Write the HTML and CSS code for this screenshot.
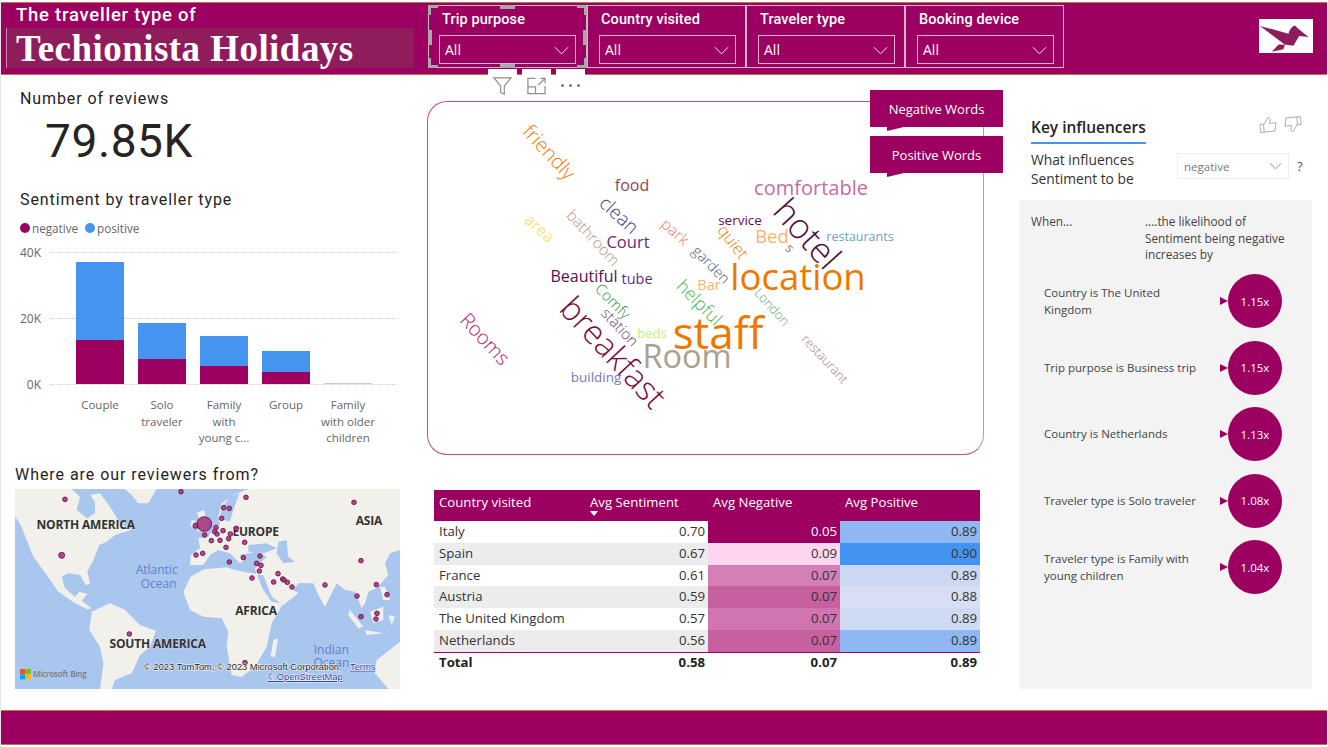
FILE: index.html
```html
<!DOCTYPE html>
<html lang="en">
<head>
<meta charset="utf-8">
<title>Techionista Holidays</title>
<link rel="stylesheet" href="styles.css">
</head>
<body>
<div class="page">
  <header class="header">
    <div class="brand">
      <div class="brand-sub">The traveller type of</div>
      <div class="brand-name">Techionista Holidays</div>
    </div>
    <div class="slicers">
      <div class="slicer slicer-focus">
        <div class="slicer-label">Trip purpose</div>
        <div class="slicer-box"><span>All</span><svg class="chev" viewBox="0 0 16 9"><path d="M1 1l7 7 7-7"/></svg></div>
        <i class="h h-tl"></i><i class="h h-tr"></i><i class="h h-bl"></i><i class="h h-br"></i><i class="h h-tm"></i><i class="h h-bm"></i><i class="h h-ml"></i><i class="h h-mr"></i>
        <div class="actions">
          <div class="action"><svg viewBox="0 0 22 22" class="act-ic"><path d="M1.500 2h19l-7.500 9v9l-4-2v-7z"/></svg></div>
          <div class="action"><svg viewBox="0 0 22 20" class="act-ic"><path d="M10 2H2v16h18v-8M2 11h8v7M13 9l7-7M15 2h5v5"/></svg></div>
          <div class="action action-more"><i></i><i></i><i></i></div>
        </div>
      </div>
      <div class="slicer">
        <div class="slicer-label">Country visited</div>
        <div class="slicer-box"><span>All</span><svg class="chev" viewBox="0 0 16 9"><path d="M1 1l7 7 7-7"/></svg></div>
      </div>
      <div class="slicer">
        <div class="slicer-label">Traveler type</div>
        <div class="slicer-box"><span>All</span><svg class="chev" viewBox="0 0 16 9"><path d="M1 1l7 7 7-7"/></svg></div>
      </div>
      <div class="slicer">
        <div class="slicer-label">Booking device</div>
        <div class="slicer-box"><span>All</span><svg class="chev" viewBox="0 0 16 9"><path d="M1 1l7 7 7-7"/></svg></div>
      </div>
    </div>
    <div class="logo">
      <svg viewBox="28 25 160 100"><path class="logo-bird" d="M31 45l84 23 4-10 7-10 8-4 12 11 29 23-28-3-17 29-26-4zM66 122l20-22 19 1-5 13z"/></svg>
    </div>
  </header>

  <main class="main">
    <section class="col-left">
      <h2 class="din-title title-reviews">Number of reviews</h2>
      <div class="stat">79.85K</div>
      <h2 class="din-title title-sent">Sentiment by traveller type</h2>
      <div class="legend">
        <span class="dot dot-neg"></span><span class="legend-text">negative</span>
        <span class="dot dot-pos"></span><span class="legend-text">positive</span>
      </div>
      <div class="chart">
        <div class="plot">
          <div class="grid-line gl-40"><span>40K</span></div>
          <div class="grid-line gl-20"><span>20K</span></div>
          <div class="grid-line gl-0"><span>0K</span></div>
          <div class="bars">
            <div class="bar-col"><div class="bar-pos" style="height:78px"></div><div class="bar-neg" style="height:44px"></div></div>
            <div class="bar-col"><div class="bar-pos" style="height:36px"></div><div class="bar-neg" style="height:25px"></div></div>
            <div class="bar-col"><div class="bar-pos" style="height:30px"></div><div class="bar-neg" style="height:18px"></div></div>
            <div class="bar-col"><div class="bar-pos" style="height:21px"></div><div class="bar-neg" style="height:12px"></div></div>
            <div class="bar-col"><div class="bar-tiny"></div></div>
          </div>
        </div>
        <div class="cats">
          <div class="cat">Couple</div>
          <div class="cat">Solo<br>traveler</div>
          <div class="cat">Family<br>with<br>young c...</div>
          <div class="cat">Group</div>
          <div class="cat">Family<br>with older<br>children</div>
        </div>
      </div>
      <h2 class="din-title title-map">Where are our reviewers from?</h2>
      <div class="map">
        <svg class="map-svg" viewBox="45 87 1155 600">
          <rect class="water" x="45" y="87" width="1155" height="600"/>
          <path class="land" d="M45 87H215L240 110 230 150 262 175 285 160 285 125 270 105 300 100 330 140 360 190 395 210 345 225 320 245 298 255 280 300 262 335 270 372 258 375 240 345 205 340 185 350 195 385 225 410 238 395 262 402 245 422 275 445 262 448 225 430 175 395 140 345 100 290 78 235 60 190 45 170Z"/>
          <path class="land" d="M375 87H470L445 130 415 130 395 105Z"/>
          <path class="land" d="M275 455 330 430 375 450 420 495 468 512 450 560 420 585 395 640 345 660 335 687H300L310 610 300 560 268 510Z"/>
          <path class="land" d="M550 395 572 350 612 328 680 322 705 330 770 342 790 390 815 425 850 430 815 490 800 560 765 620 725 650 695 645 680 560 685 515 665 475 610 470 570 450Z"/>
          <path class="land" d="M570 315 572 285 600 265 595 235 625 230 640 205 660 195 655 170 665 130 700 105 745 87H1200V270L1170 280 1155 310 1165 345 1130 385 1105 395 1095 430 1085 445 1065 395 1035 390 1010 370 975 440 955 405 940 370 895 370 880 390 895 400 850 435 815 410 790 345 770 345 765 325 800 290 770 275 720 285 735 300 720 310 690 280 655 270 630 285 610 315Z"/>
          <path class="water" d="M690 110 718 100 700 150 690 185 660 175 665 145Z"/>
          <path class="water" d="M745 255 800 250 830 265 790 280 745 275Z"/>
          <path class="water" d="M835 245 860 240 865 290 885 305 850 310 830 280Z"/>
          <path class="land" d="M590 158 612 150 622 190 630 208 590 215 605 190ZM575 180 588 182 585 200 570 198Z"/>
          <path class="land" d="M1050 450 1090 500 1075 505 1045 465ZM1095 510 1150 520 1100 525ZM1110 455 1150 440 1150 480 1120 490ZM1165 465 1185 470 1175 495ZM1140 380 1155 380 1170 420 1150 420Z"/>
          <path class="land" d="M1130 600 1200 545V687H1165L1125 640Z"/>
          <path class="land" d="M820 540 835 535 825 590 812 590Z"/>
          <text class="continent" x="257" y="208" text-anchor="middle">NORTH AMERICA</text>
          <text class="continent" x="1107" y="195" text-anchor="middle">ASIA</text>
          <text class="continent" x="767" y="228" text-anchor="middle">EUROPE</text>
          <text class="continent" x="768" y="465" text-anchor="middle">AFRICA</text>
          <text class="continent" x="473" y="565" text-anchor="middle">SOUTH AMERICA</text>
          <text class="ocean" x="470" y="342" text-anchor="middle">Atlantic</text>
          <text class="ocean" x="476" y="385" text-anchor="middle">Ocean</text>
          <text class="ocean" x="994" y="582" text-anchor="middle">Indian</text>
          <text class="ocean" x="994" y="622" text-anchor="middle">Ocean</text>
          <g class="pins">
            <circle cx="195" cy="118" r="7"/><circle cx="543" cy="95" r="7"/><circle cx="738" cy="112" r="7"/><circle cx="671" cy="143" r="7"/><circle cx="688" cy="145" r="7"/><circle cx="1062" cy="127" r="7"/><circle cx="665" cy="175" r="7"/><circle cx="587" cy="197" r="8"/><circle cx="613" cy="192" r="22"/><circle cx="648" cy="203" r="7"/><circle cx="709" cy="205" r="7"/><circle cx="644" cy="215" r="7"/><circle cx="669" cy="212" r="7"/><circle cx="651" cy="222" r="7"/><circle cx="691" cy="222" r="7"/><circle cx="614" cy="225" r="7"/><circle cx="686" cy="236" r="7"/><circle cx="634" cy="242" r="7"/><circle cx="660" cy="241" r="7"/><circle cx="734" cy="247" r="7"/><circle cx="678" cy="262" r="7"/><circle cx="185" cy="286" r="9"/><circle cx="588" cy="285" r="7"/><circle cx="608" cy="280" r="7"/><circle cx="780" cy="288" r="7"/><circle cx="730" cy="293" r="7"/><circle cx="688" cy="306" r="7"/><circle cx="770" cy="310" r="7"/><circle cx="783" cy="316" r="7"/><circle cx="778" cy="333" r="7"/><circle cx="834" cy="341" r="7"/><circle cx="848" cy="357" r="7"/><circle cx="852" cy="360" r="7"/><circle cx="862" cy="367" r="7"/><circle cx="876" cy="381" r="7"/><circle cx="756" cy="354" r="7"/><circle cx="821" cy="366" r="7"/><circle cx="1083" cy="302" r="7"/><circle cx="975" cy="375" r="7"/><circle cx="1129" cy="374" r="7"/><circle cx="1071" cy="408" r="7"/><circle cx="1161" cy="404" r="7"/><circle cx="1083" cy="470" r="7"/><circle cx="1131" cy="460" r="7"/><circle cx="1128" cy="477" r="7"/><circle cx="388" cy="522" r="7"/><circle cx="735" cy="608" r="7"/>
          </g>
          <rect class="ms-r" x="60" y="627" width="16" height="15"/><rect class="ms-g" x="77" y="627" width="15" height="15"/><rect class="ms-b" x="60" y="643" width="16" height="15"/><rect class="ms-y" x="77" y="643" width="15" height="15"/>
          <text class="bing" x="99" y="650">Microsoft Bing</text>
          <text class="attr" x="432" y="629">© 2023 TomTom, © 2023 Microsoft Corporation,</text>
          <text class="attr attr-link" x="1050" y="629">Terms</text>
          <text class="attr attr-link" x="802" y="660">© OpenStreetMap</text>
        </svg>
      </div>
    </section>

    <section class="col-mid">
      <div class="cloud">
        <span class="w w-friendly">friendly</span>
        <span class="w w-food">food</span>
        <span class="w w-clean">clean</span>
        <span class="w w-area">area</span>
        <span class="w w-bathroom">bathroom</span>
        <span class="w w-court">Court</span>
        <span class="w w-park">park</span>
        <span class="w w-service">service</span>
        <span class="w w-quiet">quiet</span>
        <span class="w w-bed">Bed</span>
        <span class="w w-s">s</span>
        <span class="w w-hotel">hotel</span>
        <span class="w w-comfortable">comfortable</span>
        <span class="w w-restaurants">restaurants</span>
        <span class="w w-beautiful">Beautiful</span>
        <span class="w w-tube">tube</span>
        <span class="w w-garden">garden</span>
        <span class="w w-location">location</span>
        <span class="w w-bar">Bar</span>
        <span class="w w-london">London</span>
        <span class="w w-helpful">helpful</span>
        <span class="w w-comfy">Comfy</span>
        <span class="w w-station">station</span>
        <span class="w w-beds">beds</span>
        <span class="w w-breakfast">breakfast</span>
        <span class="w w-room">Room</span>
        <span class="w w-staff">staff</span>
        <span class="w w-rooms">Rooms</span>
        <span class="w w-building">building</span>
        <span class="w w-restaurant">restaurant</span>
        <div class="word-btns">
          <div class="word-btn">Negative Words</div>
          <div class="word-btn">Positive Words</div>
        </div>
      </div>
      <div class="table">
        <div class="tr thead">
          <div class="th">Country visited</div>
          <div class="th th-sent">Avg Sentiment<i class="sort"></i></div>
          <div class="th">Avg Negative</div>
          <div class="th">Avg Positive</div>
        </div>
        <div class="tr"><div class="td">Italy</div><div class="td num">0.70</div><div class="td num n1">0.05</div><div class="td num p1">0.89</div></div>
        <div class="tr even"><div class="td">Spain</div><div class="td num">0.67</div><div class="td num n2">0.09</div><div class="td num p2">0.90</div></div>
        <div class="tr"><div class="td">France</div><div class="td num">0.61</div><div class="td num n3">0.07</div><div class="td num p3">0.89</div></div>
        <div class="tr even"><div class="td">Austria</div><div class="td num">0.59</div><div class="td num n4">0.07</div><div class="td num p4">0.88</div></div>
        <div class="tr"><div class="td">The United Kingdom</div><div class="td num">0.57</div><div class="td num n5">0.07</div><div class="td num p5">0.89</div></div>
        <div class="tr even"><div class="td">Netherlands</div><div class="td num">0.56</div><div class="td num n4">0.07</div><div class="td num p1">0.89</div></div>
        <div class="tr tfoot"><div class="td">Total</div><div class="td num">0.58</div><div class="td num">0.07</div><div class="td num">0.89</div></div>
      </div>
    </section>

    <section class="col-right">
      <div class="ki-head">
        <div class="ki-title">Key influencers</div>
        <div class="thumbs">
          <svg viewBox="0 0 20 18" class="thumb thumb-up"><path d="M1 8h4v9H1zM5 9l6-8 2 2-1 5h7l-2 9H5"/></svg>
          <svg viewBox="0 0 20 18" class="thumb thumb-down"><path d="M19 10h-4V1h4zM15 9l-6 8-2-2 1-5H1l2-9h12"/></svg>
        </div>
      </div>
      <div class="ki-q">
        <div class="ki-q-text">What influences<br>Sentiment to be</div>
        <div class="ki-select"><span>negative</span><svg class="chev-g" viewBox="0 0 14 8"><path d="M1 1l6 6 6-6"/></svg></div>
        <div class="ki-help">?</div>
      </div>
      <div class="ki-panel">
        <div class="ki-labels">
          <div class="ki-when">When...</div>
          <div class="ki-like">....the likelihood of<br>Sentiment being negative<br>increases by</div>
        </div>
        <div class="ki-row"><div class="ki-text">Country is The United<br>Kingdom</div><i class="ki-arrow"></i><div class="ki-circle">1.15x</div></div>
        <div class="ki-row"><div class="ki-text">Trip purpose is Business trip</div><i class="ki-arrow"></i><div class="ki-circle">1.15x</div></div>
        <div class="ki-row"><div class="ki-text">Country is Netherlands</div><i class="ki-arrow"></i><div class="ki-circle">1.13x</div></div>
        <div class="ki-row"><div class="ki-text">Traveler type is Solo traveler</div><i class="ki-arrow"></i><div class="ki-circle">1.08x</div></div>
        <div class="ki-row"><div class="ki-text">Traveler type is Family with<br>young children</div><i class="ki-arrow"></i><div class="ki-circle">1.04x</div></div>
      </div>
    </section>
  </main>

  <footer class="footer"></footer>
</div>
</body>
</html>
```

FILE: styles.css
```css
* { box-sizing: border-box; }
html, body { margin: 0; padding: 0; background: #fff; overflow: hidden; }
.page {
  width: 1328px; height: 747px; padding-top: 2px;
  display: flex; flex-direction: column;
  font-family: "Open Sans", "Liberation Sans", sans-serif;
  color: #333;
  border-left: 1px solid #e6e6e6;
}
/* header */
.header {
  height: 73px; margin-right: 1px;
  background: #9c0060;
  border-top: 1px solid #b8763e; border-bottom: 1px solid #b8763e;
  display: flex; color: #fff; flex: none;
}
.brand { width: 427px; padding: 2px 0 0 5px; flex: none; }
.brand-sub {
  font: 500 18.500px/20px Roboto, sans-serif; letter-spacing: .75px;
  padding-left: 10px; height: 23px;
}
.brand-name {
  width: 408px; height: 40px; background: #8f1d5c; border-left: 1px solid #c88aa9;
  font: 700 37px/41px "Liberation Serif", serif; padding-left: 9px; letter-spacing: .45px;
}
.slicers { display: flex; padding-top: 2px; height: 65px; flex: none; }
.slicer {
  width: 159px; height: 63px; border: 1px solid #d8b2cc;
  padding: 4px 10px 0 13px; position: relative; flex: none;
}
.slicer-focus { border-color: #c0c0c0; }
.slicer-label { font: 500 14.500px/20px Roboto, sans-serif; letter-spacing: .1px; height: 25px; }
.slicer-box {
  height: 29px; width: 137px; margin-left: -2px; border: 1px solid #d8b2cc;
  display: flex; align-items: center; justify-content: space-between;
  padding: 0 6px 0 5px;
  font: 14px "Open Sans", sans-serif;
}
.slicer-focus .slicer-box { margin-left: -3px; }
.chev { width: 15px; height: 9px; margin-top: 1px; }
.chev path { fill: none; stroke: #fff; stroke-width: 1; }
.h { position: absolute; }
.h-tl, .h-tr, .h-bl, .h-br { width: 10px; height: 10px; border: 0 solid #a9a9a9; }
.h-tl { left: -1px; top: -1px; border-width: 3px 0 0 3px; }
.h-tr { right: -1px; top: -1px; border-width: 3px 3px 0 0; }
.h-bl { left: -1px; bottom: -1px; border-width: 0 0 3px 3px; }
.h-br { right: -1px; bottom: -1px; border-width: 0 3px 3px 0; }
.h-tm, .h-bm, .h-ml, .h-mr { background: #a9a9a9; }
.h-tm { left: 71px; top: -1px; width: 15px; height: 4px; }
.h-bm { left: 71px; bottom: -1px; width: 15px; height: 4px; }
.h-ml { left: -1px; top: 24px; width: 4px; height: 15px; }
.h-mr { right: -1px; top: 24px; width: 4px; height: 15px; }
.actions {
  position: absolute; left: 59px; top: 63px; display: flex; gap: 5px;
}
.action {
  width: 29px; height: 27px; background: #fff;
  display: flex; align-items: center; justify-content: center;
}
.act-ic { width: 21px; height: 20px; margin-top: 6px; }
.act-ic path { fill: none; stroke: #8f8f8f; stroke-width: 1.300; }
.action-more { gap: 5px; padding-top: 6px; }
.action-more i { width: 3px; height: 3px; border-radius: 50%; background: #777; }
.logo {
  width: 54px; height: 34px; background: #fff; margin: 16px 14px 0 auto; flex: none;
  display: flex;
}
.logo svg { width: 54px; height: 34px; }
.logo-bird { fill: #8f1a5e; }

/* main */
.main {
  flex: none; height: 634px;
  display: grid; grid-template-columns: 385px 557px 301px;
  column-gap: 27px;
  padding-left: 14px;
}
.col-left, .col-mid, .col-right { min-width: 0; }
.col-right { margin-left: 8px; position: relative; }

.din-title {
  margin: 0; font: 400 16px/20px Roboto, sans-serif; color: #252423;
}
.title-reviews { padding: 14px 0 0 5px; height: 34px; letter-spacing: .9px; }
.stat { font: 400 46px/54px Roboto, sans-serif; letter-spacing: .6px; color: #252423; padding-left: 30px; height: 66px; margin-top: 5px; }
.title-sent { padding: 0 0 0 5px; margin-top: 10px; letter-spacing: .9px; }
.legend { display: flex; align-items: center; padding-left: 5px; margin-top: 8px; height: 20px; }
.dot { width: 10px; height: 10px; border-radius: 50%; margin-right: 2px; }
.dot-neg { background: #9c0060; }
.dot-pos { background: #4594f0; margin-left: 7px; }
.legend-text { font-size: 11.700px; color: #666; }
.chart { margin-top: 14px; }
.plot { position: relative; height: 132px; margin-left: 35px; }
.grid-line { position: absolute; left: 0; right: 5px; height: 0; border-top: 1px dotted #c8c8c8; }
.grid-line span {
  position: absolute; left: -35px; top: -9px; width: 26px; text-align: right;
  font-size: 12px; line-height: 17px; color: #666;
}
.gl-40 { top: 0; }
.gl-20 { top: 66px; }
.gl-0 { top: 132px; }
.bars { position: absolute; inset: 0; display: flex; padding-left: 19px; }
.bar-col {
  width: 62px; height: 132px; display: flex; flex-direction: column;
  justify-content: flex-end; align-items: center;
}
.bar-pos { width: 48px; background: #4594f0; }
.bar-neg { width: 48px; background: #9c0060; }
.bar-tiny { width: 48px; height: 1px; background: #c9c9d6; }
.cats { display: flex; padding-left: 54px; margin-top: 13px; height: 54px; }
.cat { width: 62px; text-align: center; font-size: 11.500px; line-height: 16.500px; color: #666; white-space: nowrap; }
.title-map { margin-top: 14px; padding-left: 0; letter-spacing: .95px; }
.map { width: 385px; height: 200px; margin-top: 4px; }
.map-svg { display: block; width: 385px; height: 200px; }
.water { fill: #a9c6ef; }
.land { fill: #f1f0ea; }
.continent { font: 700 36px "Open Sans", sans-serif; fill: #333; stroke: #f1f0ea; stroke-width: 1px; paint-order: stroke; letter-spacing: -.5px; }
.ocean { font: 400 36px "Open Sans", sans-serif; fill: #5f82cc; }
.pins circle { fill: #a5397f; stroke: #6f0a48; stroke-width: 2.500; fill-opacity: .9; }
.ms-r { fill: #f25022; } .ms-g { fill: #7fba00; } .ms-b { fill: #00a4ef; } .ms-y { fill: #ffb900; }
.bing { font: 600 24px "Open Sans", sans-serif; fill: #7a7a7a; letter-spacing: -.5px; }
.attr { font: 400 28px "Liberation Sans", sans-serif; fill: #222; stroke: #fff; stroke-width: 3px; paint-order: stroke; }
.attr-link { fill: #1a3fa8; text-decoration: underline; }

/* word cloud */
.col-mid { padding-top: 26px; }
.cloud {
  width: 557px; height: 354px; position: relative;
  border: 1px solid #c04d94; border-right-color: #c98dbb; border-radius: 20px;
}
.w { position: absolute; white-space: nowrap; font-weight: 400; line-height: 1; transform: translate(-50%, -50%) rotate(var(--r, 0deg)); }
.w-friendly { left: 121px; top: 50px; font-size: 20px; color: #ee7700; --r: 47deg; font-weight: 300; }
.w-food { left: 204px; top: 83px; font-size: 16px; color: #8a4a4a; }
.w-clean { left: 191px; top: 113px; font-size: 19px; color: #4f3b7a; --r: 42deg; font-weight: 300; }
.w-area { left: 112px; top: 126px; font-size: 16px; color: #ffdf7a; --r: 42deg; }
.w-bathroom { left: 165px; top: 136px; font-size: 15.500px; color: #bd9282; --r: 47deg; font-weight: 300; }
.w-court { left: 200px; top: 140px; font-size: 16.500px; color: #5f2d78; }
.w-park { left: 247px; top: 130px; font-size: 15.500px; color: #f27a60; --r: 42deg; font-weight: 300; }
.w-service { left: 312px; top: 119px; font-size: 13.500px; color: #6a0a50; }
.w-quiet { left: 305px; top: 140px; font-size: 16.500px; color: #ee7700; --r: 52deg; font-weight: 300; }
.w-bed { left: 344px; top: 134px; font-size: 18.500px; color: #fdb26c; }
.w-s { left: 362px; top: 146px; font-size: 13px; color: #8a7a70; --r: 45deg; }
.w-hotel { left: 380px; top: 131px; font-size: 35px; color: #4d0f40; --r: 48deg; font-weight: 300; }
.w-comfortable { left: 383px; top: 86px; font-size: 20px; color: #c86aa8; }
.w-restaurants { left: 432px; top: 135px; font-size: 12.500px; color: #6ea5b8; }
.w-beautiful { left: 156px; top: 174px; font-size: 16px; color: #5a0f50; }
.w-tube { left: 209px; top: 177px; font-size: 14.500px; color: #5f2d78; }
.w-garden { left: 283px; top: 163px; font-size: 14.500px; color: #4a5a88; --r: 45deg; font-weight: 300; }
.w-location { left: 370px; top: 174px; font-size: 36.500px; color: #ee7700; }
.w-bar { left: 281px; top: 183px; font-size: 14.500px; color: #fdb26c; }
.w-london { left: 344px; top: 205px; font-size: 13px; color: #6aa870; --r: 48deg; font-weight: 300; }
.w-helpful { left: 272px; top: 200px; font-size: 18px; color: #4cb04c; --r: 45deg; font-weight: 300; }
.w-comfy { left: 185px; top: 199px; font-size: 15px; color: #2e8b4a; --r: 45deg; font-weight: 300; }
.w-station { left: 192px; top: 225px; font-size: 15px; color: #6f2f80; --r: 47deg; font-weight: 300; }
.w-beds { left: 224px; top: 231px; font-size: 13px; color: #bff07c; }
.w-breakfast { left: 186px; top: 250px; font-size: 33px; color: #7a0b3f; --r: 47deg; font-weight: 300; }
.w-room { left: 259px; top: 254px; font-size: 32.500px; color: #aaa090; }
.w-staff { left: 290px; top: 230px; font-size: 44px; color: #ee7700; }
.w-rooms { left: 57px; top: 237px; font-size: 20px; color: #b0207a; --r: 47deg; font-weight: 300; }
.w-building { left: 168px; top: 276px; font-size: 13.500px; color: #7a76bf; }
.w-restaurant { left: 397px; top: 257px; font-size: 13px; color: #a88078; --r: 47deg; font-weight: 300; }
.word-btns {
  position: absolute; left: 442px; top: -12px; display: flex; flex-direction: column; gap: 9px;
}
.word-btn {
  position: relative; width: 133px; height: 37px; background: #9c0060; color: #fff;
  font-size: 13px; font-weight: 500; display: flex; align-items: center; justify-content: center;
}
.word-btn::after {
  content: ""; position: absolute; left: 17px; top: 37px; width: 17px; height: 4px;
  background: #9c0060; clip-path: polygon(0 0, 100% 0, 0 100%);
}
/* table */
.table { width: 546px; margin: 35px 0 0 7px; font-size: 13.200px; }
.tr { display: grid; grid-template-columns: 155px 119px 132px 140px; height: 21.800px; background: #fff; color: #333; }
.even { background: #ececec; }
.thead { height: 31px; background: #9c0060; color: #fff; }
.th { padding: 3px 0 0 5px; line-height: 19px; position: relative; }
.th:nth-child(2) { padding-left: 1px; white-space: nowrap; }
.sort {
  position: absolute; left: 1px; top: 21px;
  border-left: 4.500px solid transparent; border-right: 4.500px solid transparent; border-top: 5px solid #fff;
}
.td { padding: 0 3px 0 5px; line-height: 21px; }
.tfoot .td { line-height: 19px; }
.num { text-align: right; }
.n1 { background: #9c0060; color: #fff; }
.n2 { background: #fdd5ee; }
.n3 { background: #d480b6; }
.n4 { background: #c7609f; }
.n5 { background: #d175b0; }
.p1 { background: #8fb8f2; }
.p2 { background: #4593f0; }
.p3 { background: #cbd8f4; }
.p4 { background: #d8def3; }
.p5 { background: #cfdaf3; }
.tfoot { border-top: 1px solid #9c0060; font-weight: 700; height: 22px; color: #222; }

/* key influencers */
.ki-head { padding-top: 41px; position: relative; height: 68px; }
.ki-title {
  margin-left: 12px; width: 115px; height: 28px;
  font-size: 15.500px; line-height: 22px; font-weight: 600; color: #252423;
  border-bottom: 2px solid #4594f0; white-space: nowrap;
}
.thumbs { display: flex; gap: 7px; position: absolute; left: 240px; top: 41px; }
.thumb { width: 18px; height: 17px; }
.thumb-up { transform: rotate(-6deg); }
.thumb-down { transform: rotate(-6deg); }
.thumb path { fill: none; stroke: #a8a8a8; stroke-width: 1; }
.ki-q { display: flex; margin-left: 12px; height: 57px; padding-top: 7px; }
.ki-q-text { width: 146px; font-size: 13.800px; line-height: 19px; color: #333; }
.ki-select {
  width: 112px; height: 26px; border: 1px solid #eee; margin-top: 3px;
  display: flex; align-items: center; justify-content: space-between;
  padding: 0 6px; font-size: 11.500px; color: #777;
}
.chev-g { width: 13px; height: 8px; }
.chev-g path { fill: none; stroke: #888; stroke-width: 1; }
.ki-help { margin: 7px 0 0 8px; font-size: 13px; color: #555; }
.ki-panel { background: #f3f3f3; height: 489px; padding-top: 13px; }
.ki-labels { display: flex; font-size: 11.800px; line-height: 16.500px; color: #444; height: 61px; padding-left: 12px; }
.ki-when { width: 114px; }
.ki-row { display: flex; align-items: center; height: 54px; margin-bottom: 12.500px; padding-left: 25px; position: relative; }
.ki-text { width: 176px; font-size: 11.500px; line-height: 16.500px; color: #444; white-space: nowrap; padding-top: 1px; }
.ki-arrow {
  width: 0; height: 0; border-left: 8px solid #9c0060;
  border-top: 4px solid transparent; border-bottom: 4px solid transparent;
}
.ki-circle {
  width: 54px; height: 54px; border-radius: 50%; background: #9c0060; color: #fff;
  display: flex; align-items: center; justify-content: center; font-size: 11.500px;
}
.footer {
  height: 35px; margin-top: 1px; margin-right: 1px; flex: none;
  background: #9c0060;
  border-top: 1px solid #b8763e; border-bottom: 1px solid #b8763e;
}
```
